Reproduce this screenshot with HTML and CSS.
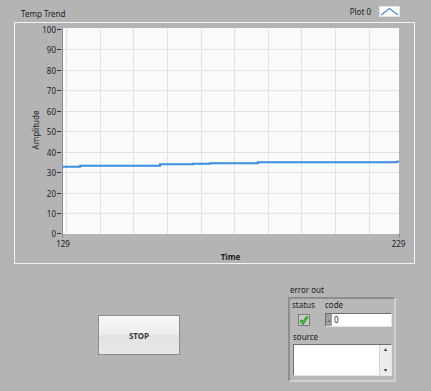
FILE: index.html
```html
<!DOCTYPE html>
<html lang="en">
<head>
    <meta charset="UTF-8">
    <meta name="viewport" content="width=device-width, initial-scale=1.0">
    <title>Temp Trend</title>
    <link rel="stylesheet" href="styles.css">
</head>
<body>
    <div class="panel">
        <div class="chart-head">
            <span class="chart-title">Temp Trend</span>
            <div class="legend">
                <span class="legend-name">Plot 0</span>
                <svg class="legend-swatch" width="21" height="11" viewBox="0 0 21 11">
                    <rect x="0.5" y="0.5" width="20" height="10" fill="#ffffff" stroke="#e6e6e6"/>
                    <polyline points="2,9 10.5,2.5 19,9" fill="none" stroke="#4a8fdc" stroke-width="1.3"/>
                </svg>
            </div>
        </div>

        <!-- waveform chart -->
        <div class="chart">
            <svg class="chart-svg" width="399" height="240" viewBox="0 0 399 240">
                <rect x="48" y="5" width="336" height="206" fill="#fbfbfb"/>
                <g stroke="#e3e3e3" stroke-width="1">
                    <line x1="51.5" y1="5" x2="51.5" y2="211"/>
                    <line x1="85.5" y1="5" x2="85.5" y2="211"/>
                    <line x1="118.5" y1="5" x2="118.5" y2="211"/>
                    <line x1="152.5" y1="5" x2="152.5" y2="211"/>
                    <line x1="186.5" y1="5" x2="186.5" y2="211"/>
                    <line x1="219.5" y1="5" x2="219.5" y2="211"/>
                    <line x1="253.5" y1="5" x2="253.5" y2="211"/>
                    <line x1="286.5" y1="5" x2="286.5" y2="211"/>
                    <line x1="320.5" y1="5" x2="320.5" y2="211"/>
                    <line x1="354.5" y1="5" x2="354.5" y2="211"/>
                    <line x1="48" y1="190.5" x2="384" y2="190.5"/>
                    <line x1="48" y1="170.5" x2="384" y2="170.5"/>
                    <line x1="48" y1="149.5" x2="384" y2="149.5"/>
                    <line x1="48" y1="129.5" x2="384" y2="129.5"/>
                    <line x1="48" y1="108.5" x2="384" y2="108.5"/>
                    <line x1="48" y1="88.5" x2="384" y2="88.5"/>
                    <line x1="48" y1="67.5" x2="384" y2="67.5"/>
                    <line x1="48" y1="47.5" x2="384" y2="47.5"/>
                    <line x1="48" y1="26.5" x2="384" y2="26.5"/>
                </g>
                <line x1="47.5" y1="5" x2="47.5" y2="215" stroke="#8c8c8c"/>
                <line x1="384.5" y1="211" x2="384.5" y2="215" stroke="#8c8c8c"/>

                <g class="ticks" stroke="#333333">
                    <line x1="42" y1="6.5" x2="46" y2="6.5"/>
                    <line x1="42" y1="26.5" x2="46" y2="26.5"/>
                    <line x1="42" y1="47.5" x2="46" y2="47.5"/>
                    <line x1="42" y1="67.5" x2="46" y2="67.5"/>
                    <line x1="42" y1="88.5" x2="46" y2="88.5"/>
                    <line x1="42" y1="108.5" x2="46" y2="108.5"/>
                    <line x1="42" y1="129.5" x2="46" y2="129.5"/>
                    <line x1="42" y1="149.5" x2="46" y2="149.5"/>
                    <line x1="42" y1="170.5" x2="46" y2="170.5"/>
                    <line x1="42" y1="190.5" x2="46" y2="190.5"/>
                    <line x1="42" y1="210.5" x2="46" y2="210.5"/>
                </g>
                <g class="axis-text" text-anchor="end">
                    <text x="41" y="9.5">100</text>
                    <text x="41" y="29.5">90</text>
                    <text x="41" y="50.5">80</text>
                    <text x="41" y="70.5">70</text>
                    <text x="41" y="91.5">60</text>
                    <text x="41" y="111.5">50</text>
                    <text x="41" y="132.5">40</text>
                    <text x="41" y="152.5">30</text>
                    <text x="41" y="173.5">20</text>
                    <text x="41" y="193.5">10</text>
                    <text x="41" y="213.5">0</text>
                </g>
                <g class="axis-text" text-anchor="middle">
                    <text x="48" y="224">129</text>
                    <text x="383.5" y="224">229</text>
                    <text class="axis-name bold" x="215.5" y="237">Time</text>
                    <text class="axis-name" x="0" y="0" transform="translate(24 107) rotate(-90)">Amplitude</text>
                </g>

                <polyline class="trace" points="48,143.7 65,143.7 65,142.7 145,142.7 145,141.3 178,141.3 178,140.7 195,140.7 195,140.3 243,140.3 243,139.3 381,139.3 384,138.3"/>
            </svg>
        </div>

        <div class="bottom">
            <button class="stop" type="button">STOP</button>

            <div class="error-out">
                <div class="cluster-label">error out</div>
                <div class="cluster">
                    <div class="cluster-row">
                        <div class="field status">
                            <span class="lbl">status</span>
                            <svg class="check" width="12" height="12" viewBox="0 0 12 12">
                                <rect x="0.5" y="0.5" width="11" height="11" fill="#c9c9c9" stroke="#7a7a7a"/>
                                <polyline points="2.5,6.5 5,9 9.5,2.5" fill="none" stroke="#1f7a1f" stroke-width="2.6"/>
                                <polyline points="2.5,6.5 5,9 9.5,2.5" fill="none" stroke="#3fd13f" stroke-width="1.4"/>
                            </svg>
                        </div>
                        <div class="field code">
                            <span class="lbl">code</span>
                            <div class="numeric">
                                <span class="incdec">&#x25B4;</span>
                                <span class="num">0</span>
                            </div>
                        </div>
                    </div>
                    <div class="field source">
                        <span class="lbl">source</span>
                        <div class="strbox">
                            <div class="scroll">
                                <span class="arrow">&#x25B4;</span>
                                <span class="arrow">&#x25BE;</span>
                            </div>
                        </div>
                    </div>
                </div>
            </div>
        </div>
    </div>
</body>
</html>
```

FILE: styles.css
```css
body {
    font-family: 'Noto Sans', 'Liberation Sans', sans-serif;
    margin: 0;
    padding: 0;
    background-color: #b4b4b4;
    color: #1c1c1c;
    font-size: 8px;
}
.panel {
    width: 431px;
    height: 391px;
    overflow: hidden;
}
.chart-head {
    display: flex;
    align-items: flex-start;
    height: 22px;
}
.chart-title {
    margin: 9px 0 0 21px;
    line-height: 10px;
}
.legend {
    display: flex;
    align-items: center;
    gap: 8px;
    margin: 6px 31px 0 auto;
}
.legend-name {
    line-height: 11px;
}
.legend-swatch {
    display: block;
}
.chart {
    margin-left: 14px;
    width: 399px;
    height: 240px;
    border: 1px solid #f2f2f2;
}
.chart-svg {
    display: block;
}
.axis-text text {
    font-family: 'Noto Sans', 'Liberation Sans', sans-serif;
    font-size: 8px;
    fill: #1c1c1c;
}
.axis-text .bold {
    font-weight: bold;
}
.trace {
    fill: none;
    stroke: #3a8ee2;
    stroke-width: 2;
}
.bottom {
    display: flex;
    align-items: flex-start;
}
.stop {
    margin: 51px 0 0 98px;
    width: 82px;
    height: 40px;
    padding: 0;
    border: 1px solid #8c8c8c;
    background: linear-gradient(#f8f8f8, #eeeeee 48%, #e2e2e2 52%, #e8e8e8);
    font-family: 'Noto Sans', 'Liberation Sans', sans-serif;
    font-size: 8px;
    font-weight: bold;
    color: #3a3a3a;
}
.error-out {
    margin: 21px 0 0 108px;
}
.cluster-label {
    line-height: 10px;
    margin-left: 2px;
}
.cluster {
    box-sizing: border-box;
    width: 108px;
    height: 85px;
    margin-top: 2px;
    padding: 1px 0 0 2px;
    border: 2px solid #9c9c9c;
    border-color: #8e8e8e #d0d0d0 #d0d0d0 #8e8e8e;
    background-color: #b8b8b8;
}
.cluster-row {
    display: flex;
    gap: 2px;
}
.field {
    display: flex;
    flex-direction: column;
    align-items: flex-start;
}
.lbl {
    line-height: 10px;
}
.status {
    width: 31px;
}
.check {
    display: block;
    margin: 4px 0 0 6px;
}
.numeric {
    display: flex;
    margin-top: 3px;
    width: 67px;
    height: 14px;
    box-sizing: border-box;
    border: 1px solid;
    border-color: #6e6e6e #e4e4e4 #e4e4e4 #6e6e6e;
    background-color: #ffffff;
}
.incdec {
    width: 6px;
    background-color: #9e9e9e;
    color: #6a6a6a;
    font-size: 5px;
    line-height: 12px;
    text-align: center;
}
.num {
    margin-left: 2px;
    line-height: 12px;
    font-size: 8px;
}
.source {
    margin: 5px 0 0 1px;
}
.strbox {
    display: flex;
    justify-content: flex-end;
    margin-top: 2px;
    width: 99px;
    height: 32px;
    box-sizing: border-box;
    border: 1px solid;
    border-color: #6e6e6e #e4e4e4 #e4e4e4 #6e6e6e;
    background-color: #ffffff;
}
.scroll {
    display: flex;
    flex-direction: column;
    justify-content: space-between;
    width: 11px;
    background-color: #ececec;
    border-left: 1px solid #d4d4d4;
}
.arrow {
    font-size: 6px;
    line-height: 9px;
    text-align: center;
    color: #333333;
}
```
